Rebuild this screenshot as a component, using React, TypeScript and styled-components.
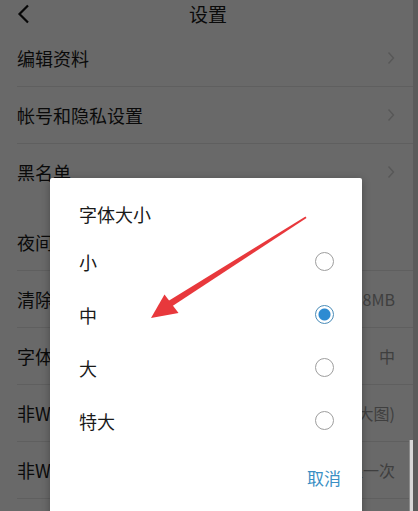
import styled, { createGlobalStyle } from "styled-components";

const GlobalStyle = createGlobalStyle`
  html, body {
    margin: 0;
    padding: 0;
    width: 418px;
    height: 511px;
    overflow: hidden;
    background: #5b5b5b;
    font-family: "Noto Sans CJK SC", "Liberation Sans", sans-serif;
  }
`;

const settings = [
  { label: "编辑资料", arrow: true },
  { label: "帐号和隐私设置", arrow: true },
  { label: "黑名单", arrow: true, gapAfter: true },
  { label: "夜间模式" },
  { label: "清除缓存", value: "36.8MB" },
  { label: "字体大小", value: "中" },
  { label: "非WiFi网络下加载图片", value: "高清(大图)" },
  { label: "非WiFi网络下播放视频", value: "提醒一次" },
];

const options = ["小", "中", "大", "特大"];

export default function App() {
  return (
    <>
      <GlobalStyle />
      <Screen>
        <Page>
          <Header>
            <BackIcon width="14" height="20" viewBox="0 0 14 20">
              <path d="M11 1.5 L2.5 10 L11 18.5" fill="none" stroke="#111" strokeWidth="2.2" />
            </BackIcon>
            <HeaderTitle>设置</HeaderTitle>
          </Header>
          <List>
            {settings.map((s) => (
              <Row key={s.label} $gapAfter={s.gapAfter}>
                <RowLabel>{s.label}</RowLabel>
                {s.value && <RowValue>{s.value}</RowValue>}
                {s.arrow && (
                  <svg width="8" height="14" viewBox="0 0 8 14">
                    <path d="M1.5 1.5 L6.5 7 L1.5 12.5" fill="none" stroke="#d4d4d4" strokeWidth="1.5" />
                  </svg>
                )}
              </Row>
            ))}
          </List>
        </Page>
        <Overlay>
          <Dialog>
            <DialogTitle>字体大小</DialogTitle>
            <OptionList>
              {options.map((o) => (
                <Option key={o}>
                  <span>{o}</span>
                  <Radio $checked={o === "中"} />
                </Option>
              ))}
            </OptionList>
            <Footer>
              <CancelButton>取消</CancelButton>
            </Footer>
          </Dialog>
        </Overlay>
        <Scrollbar />
        <Annotation width="418" height="511" viewBox="0 0 418 511">
          <path
            d="M305.5 216.5 L306.5 218 L171 307 L167.5 301.5 Z"
            fill="#e8383c"
          />
          <path d="M151 318 L164.5 294.5 L178.5 313 Z" fill="#e8383c" />
        </Annotation>
      </Screen>
    </>
  );
}

const Screen = styled.div`
  position: relative;
  width: 413px;
  height: 511px;
  overflow: hidden;
  background: #ffffff;
`;

const Page = styled.div`
  display: flex;
  flex-direction: column;
  color: #1a1a1a;
`;

const Header = styled.div`
  height: 26px;
  display: flex;
  align-items: center;
  justify-content: center;
  position: relative;
`;

const BackIcon = styled.svg`
  position: absolute;
  left: 17px;
  top: 4px;
`;

const HeaderTitle = styled.span`
  font-size: 19px;
  margin-left: 3px;
`;

const List = styled.div`
  display: flex;
  flex-direction: column;
  padding-top: 4px;
`;

const Row = styled.div<{ $gapAfter?: boolean }>`
  height: 56px;
  margin-left: 17px;
  padding-right: 18px;
  display: flex;
  align-items: center;
  gap: 8px;
  border-bottom: ${(p) => (p.$gapAfter ? "none" : "1px solid #e6e6e6")};
  margin-bottom: ${(p) => (p.$gapAfter ? "14px" : "0")};
`;

const RowLabel = styled.span`
  flex: 1;
  font-size: 18px;
`;

const RowValue = styled.span`
  font-size: 16px;
  color: #999;
`;

const Overlay = styled.div`
  position: absolute;
  inset: 0;
  background: rgba(0, 0, 0, 0.59);
  padding: 178px 51px 0 50px;
`;

const Dialog = styled.div`
  background: #fff;
  height: 360px;
  border-radius: 2px;
  padding: 24px 21px 0 29px;
  box-shadow: 0 2px 8px rgba(0, 0, 0, 0.3);
  color: #1a1a1a;
`;

const DialogTitle = styled.div`
  height: 24px;
  line-height: 24px;
  font-size: 18px;
`;

const OptionList = styled.div`
  margin-top: 9px;
  display: flex;
  flex-direction: column;
`;

const Option = styled.div`
  height: 53px;
  display: flex;
  align-items: center;
  justify-content: space-between;
  padding-right: 7px;
  font-size: 18px;
`;

const Radio = styled.span<{ $checked?: boolean }>`
  width: 17px;
  height: 17px;
  border-radius: 50%;
  border: 1.5px solid ${(p) => (p.$checked ? "#4a8cb8" : "#9e9e9e")};
  background: ${(p) =>
    p.$checked ? "radial-gradient(circle, #2d8bd2 0 5.5px, #fff 6.5px)" : "#fff"};
`;

const Footer = styled.div`
  display: flex;
  justify-content: flex-end;
  margin-top: 13px;
`;

const CancelButton = styled.span`
  height: 36px;
  line-height: 36px;
  font-size: 17px;
  color: #3a8fc4;
`;

const Scrollbar = styled.div`
  position: absolute;
  right: 0;
  top: 440px;
  width: 3px;
  height: 71px;
  background: #d8d8d8;
  border-left: 1px solid #8a8a8a;
`;

const Annotation = styled.svg`
  position: absolute;
  left: 0;
  top: 0;
  pointer-events: none;
`;
